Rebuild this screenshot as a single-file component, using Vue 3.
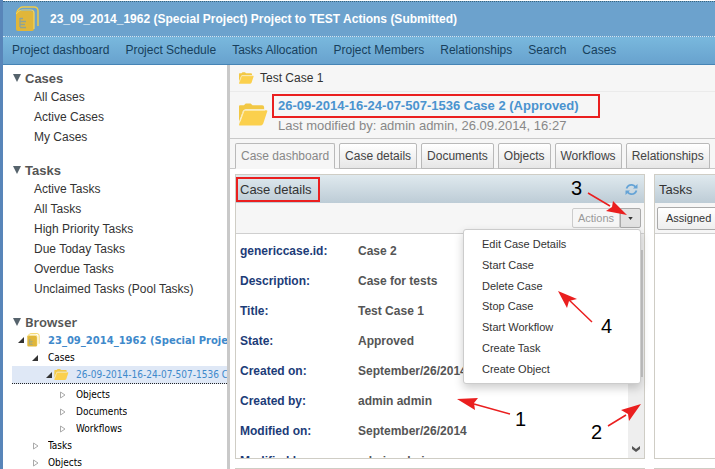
<script setup>
import { ref } from 'vue'

const navLinks = ['Project dashboard', 'Project Schedule', 'Tasks Allocation', 'Project Members', 'Relationships', 'Search', 'Cases']
const groups = [
  { title: 'Cases', items: ['All Cases', 'Active Cases', 'My Cases'] },
  { title: 'Tasks', items: ['Active Tasks', 'All Tasks', 'High Priority Tasks', 'Due Today Tasks', 'Overdue Tasks', 'Unclaimed Tasks (Pool Tasks)'] }
]
const tree = [
  { label: '23_09_2014_1962 (Special Project)', level: 0, open: true, icon: 'book' },
  { label: 'Cases', level: 1, open: true },
  { label: '26-09-2014-16-24-07-507-1536 Case 2', level: 2, open: true, icon: 'folder' },
  { label: 'Objects', level: 3 },
  { label: 'Documents', level: 3 },
  { label: 'Workflows', level: 3 },
  { label: 'Tasks', level: 1 },
  { label: 'Objects', level: 1 }
]
const tabs = ['Case dashboard', 'Case details', 'Documents', 'Objects', 'Workflows', 'Relationships']
const activeTab = ref('Case dashboard')
const details = [
  ['genericcase.id:', 'Case 2'],
  ['Description:', 'Case for tests'],
  ['Title:', 'Test Case 1'],
  ['State:', 'Approved'],
  ['Created on:', 'September/26/2014'],
  ['Created by:', 'admin admin'],
  ['Modified on:', 'September/26/2014'],
  ['Modified by:', 'admin admin']
]
const actions = ['Edit Case Details', 'Start Case', 'Delete Case', 'Stop Case', 'Start Workflow', 'Create Task', 'Create Object']
const menuOpen = ref(true)
</script>

<template>
  <div class="page">
    <svg class="defs" aria-hidden="true">
      <symbol id="folder" viewBox="0 0 30 23">
        <path d="M0 19V3q0-1 1-1h4l2-2h5l2 2h10q2 0 2 2v2H7q-2 0-3 2z" fill="#f2c845" />
        <path d="M6 7h22q2 0 1 2l-4 12q-1 2-3 2H1q-1 0-1-1L4 9q1-2 2-2z" fill="#fbd04d" />
        <path d="M1 19 5 8q1-1 2-1h20" fill="none" stroke="#fdf0c4" stroke-width="1" />
      </symbol>
      <symbol id="book" viewBox="0 0 23 26">
        <path d="M1 7q0-3 3-5 1-1 3-1h11q4 0 4 4v15" fill="none" stroke="#f1cc45" stroke-width="1.4" />
        <path d="M0 7q0-2 2-2h13q3 0 3 3v15q0 2-2 2H2q-2 0-2-2z" fill="#e0b63a" />
        <path d="M0 8q3-4 6-4h9q3 0 3 3v16" fill="none" stroke="#f5d65a" stroke-width="1.2" />
        <path d="M4 12v9M4 12.500h3M4 15.500h6M4 18.500h5M4 21.500h6" fill="none" stroke="#8ea398" stroke-width="1.300" />
      </symbol>
    </svg>

    <header class="header">
      <svg class="book"><use href="#book" /></svg>
      <h1>23_09_2014_1962 (Special Project) Project to TEST Actions (Submitted)</h1>
    </header>
    <nav class="nav">
      <a v-for="l in navLinks" :key="l" href="#">{{ l }}</a>
    </nav>

    <div class="layout">
      <aside class="sidebar">
        <section v-for="g in groups" :key="g.title" class="group">
          <h2><svg class="caret" viewBox="0 0 8 8"><path d="M0 0h8L4 8z" fill="#56636c" /></svg>{{ g.title }}</h2>
          <ul>
            <li v-for="i in g.items" :key="i"><a href="#">{{ i }}</a></li>
          </ul>
        </section>
        <section class="group">
          <h2 class="browser-title"><svg class="caret" viewBox="0 0 8 8"><path d="M0 0h8L4 8z" fill="#56636c" /></svg>Browser</h2>
          <ul class="tree">
            <li v-for="(n, k) in tree" :key="k" :class="['level-' + n.level, n.icon]">
              <svg v-if="n.open" class="twist" viewBox="0 0 7 8"><path d="M6 1v6H0z" fill="#333" /></svg>
              <svg v-else class="twist" viewBox="0 0 7 8"><path d="M1.500 1v6L6 4z" fill="#fff" stroke="#aaa" /></svg>
              <svg v-if="n.icon" class="node-icon"><use :href="'#' + n.icon" /></svg>
              <a href="#">{{ n.label }}</a>
            </li>
          </ul>
        </section>
      </aside>

      <main class="main">
        <div class="crumb">
          <svg class="folder-small"><use href="#folder" /></svg>
          <a href="#">Test Case 1</a>
        </div>
        <div class="case-head">
          <svg class="folder-big"><use href="#folder" /></svg>
          <div class="case-text">
            <h2>26-09-2014-16-24-07-507-1536 Case 2 (Approved)</h2>
            <p>Last modified by: admin admin, 26.09.2014, 16:27</p>
          </div>
        </div>
        <div class="tabs" role="tablist">
          <button v-for="t in tabs" :key="t" role="tab" :class="{ active: t === activeTab }" @click="activeTab = t">{{ t }}</button>
        </div>

        <div class="panels">
          <section class="panel">
            <div class="panel-title">
              <h3 class="marked">Case details</h3>
              <button class="refresh" aria-label="Refresh">
                <svg viewBox="0 0 13 13" fill="none" stroke="#64a3d6" stroke-width="1.800">
                  <path d="M1.500 5.500Q3 1.500 7 1.800q2 .2 3.500 2M11.500 7.500Q10 11.500 6 11.200q-2-.2-3.500-2" />
                  <path d="M12.500 1v4.500H8zM.5 12V7.500H5z" fill="#64a3d6" stroke="none" />
                </svg>
              </button>
            </div>
            <div class="toolbar">
              <div class="split">
                <button class="act">Actions</button>
                <button class="drop" aria-label="Open actions" @click="menuOpen = !menuOpen">
                  <svg viewBox="0 0 6 4"><path d="M0 0h6L3 4z" fill="#333" /></svg>
                </button>
                <ul v-if="menuOpen" class="menu">
                  <li v-for="a in actions" :key="a"><button>{{ a }}</button></li>
                </ul>
              </div>
            </div>
            <div class="panel-body">
              <dl>
                <div v-for="d in details" :key="d[0]">
                  <dt>{{ d[0] }}</dt><dd>{{ d[1] }}</dd>
                </div>
              </dl>
              <div class="scroll">
                <div class="thumb"></div>
                <svg viewBox="0 0 8 6"><path d="M0 0l4 3 4-3v3L4 6 0 3z" fill="#555" /></svg>
              </div>
            </div>
          </section>
          <section class="panel">
            <div class="panel-title"><h3>Tasks</h3></div>
            <div class="toolbar tasks-bar"><button class="assigned">Assigned</button></div>
          </section>
        </div>
        <div class="panels">
          <section class="panel"></section>
          <section class="panel"></section>
        </div>
      </main>
    </div>

    <svg class="notes" width="715" height="469">
      <g stroke="#ea1f1f" stroke-width="1.500">
        <path d="M510 414 474 404M608 426l18-11M588 193l22 13M592 322l-25-24" />
      </g>
      <g fill="#ea1f1f">
        <path d="M457 399l21-1-4 5 1 7zM641 404l-20 6 7 4 1 7zM627 215l-14-14-1 6-6 4zM558 291l19 8-8 2-2 7z" />
      </g>
      <g class="digits">
        <text x="515" y="426">1</text>
        <text x="591" y="439">2</text>
        <text x="571" y="195">3</text>
        <text x="601" y="333">4</text>
      </g>
    </svg>
  </div>
</template>

<style>
body { margin: 0; }
</style>

<style scoped>
* { box-sizing: border-box; }
.page {
  position: relative;
  display: flex;
  flex-direction: column;
  height: 100vh;
  overflow: hidden;
  padding-top: 1px;
  border-left: 3px solid #5885b9;
  background: #fff;
  font-family: "Liberation Sans", Arial, sans-serif;
  font-size: 12px;
  color: #333;
}
h1, h2, h3, p, ul, dl, dd { margin: 0; padding: 0; }
ul { list-style: none; }
a { color: inherit; text-decoration: none; }
button { font: inherit; color: inherit; margin: 0; }
svg { flex: none; display: block; }
.defs { position: absolute; width: 0; height: 0; }

.header {
  display: flex;
  align-items: center;
  gap: 11px;
  flex: none;
  height: 36px;
  padding-left: 13px;
  border-top: 1px dotted #37647d;
  border-bottom: 1px dotted #d4e5f1;
  background: #6ca2cd;
  color: #fff;
}
.header h1 { font-size: 12px; font-weight: bold; white-space: nowrap; }
.header .book { width: 23px; height: 26px; }
.nav {
  display: flex;
  align-items: center;
  gap: 16px;
  flex: none;
  height: 28px;
  padding: 0 9px 2px;
  border-bottom: 1px solid #4684b5;
  background: linear-gradient(#79b8dd, #68a2ce);
  color: #173f5c;
  white-space: nowrap;
}

.layout { display: flex; flex: 1; min-height: 0; }
.sidebar {
  flex: none;
  width: 227px;
  padding-top: 4px;
  overflow: hidden;
  border-right: 3px solid #c9c9c9;
}
.group { margin-bottom: 14px; }
.group h2 {
  display: flex;
  align-items: center;
  gap: 4px;
  height: 18px;
  padding-left: 10px;
  font-size: 13px;
  color: #555;
}
.group h2.browser-title { font-family: "Noto Sans", sans-serif; font-weight: 600; }
.caret { width: 8px; height: 8px; }
.group ul:not(.tree) li { line-height: 20px; padding-left: 31px; white-space: nowrap; }
.tree { padding-left: 9px; font-family: "DejaVu Sans Condensed", "DejaVu Sans", sans-serif; font-stretch: condensed; font-size: 10px; color: #000; }
.tree li { display: flex; align-items: center; height: 17px; white-space: nowrap; }
.tree a { min-width: 0; overflow: hidden; line-height: 17px; }
.twist { width: 7px; height: 8px; margin-right: 9px; }
.level-0 { padding-left: 6px; }
.level-1 { padding-left: 20px; }
.level-2 { padding-left: 34px; }
.level-3 { padding-left: 47px; }
.level-3 .twist { margin-right: 10px; }
.tree .book, .tree .folder { color: #4089cb; }
.tree .book { height: 18px; font-family: "DejaVu Sans", sans-serif; font-stretch: normal; font-weight: bold; }
.tree .folder { height: 18px; margin-bottom: 2px; background: #dfe8f6; border-bottom: 1px dotted #222; }
.book .twist, .folder .twist { margin-right: 1px; }
.node-icon { width: 15px; height: 14px; margin-right: 7px; }
.folder .node-icon { height: 11px; }

.main { flex: 1; min-width: 0; overflow: hidden; background: #fff; }
.crumb, .case-head, .tabs { background: #f6f6f6; }
.crumb {
  display: flex;
  align-items: center;
  gap: 6px;
  height: 27px;
  padding-left: 9px;
  border-bottom: 1px solid #ebebeb;
}
.folder-small { width: 15px; height: 12px; }
.case-head {
  display: flex;
  gap: 4px;
  height: 47px;
  padding: 2px 0 0 9px;
  border-bottom: 1px solid #c9c9c9;
}
.folder-big { width: 29px; height: 23px; margin-top: 9px; }
.case-text { white-space: nowrap; }
.case-text h2 {
  width: 328px;
  height: 24px;
  padding-left: 4px;
  border: 2px solid #ea1f1f;
  font-size: 13px;
  line-height: 20px;
  color: #4a93cf;
}
.case-text p { padding-left: 6px; font-size: 13px; line-height: 15px; color: #888; }
.tabs {
  display: flex;
  gap: 4px;
  height: 30px;
  padding: 4px 5px 0;
  border-bottom: 1px solid #c9c9c9;
}
.tabs button {
  height: 26px;
  padding: 0 5px;
  border: 1px solid #b9b9b9;
  border-radius: 2px 2px 0 0;
  background: linear-gradient(#fff, #e6e6e6);
  color: #444;
  white-space: nowrap;
}
.tabs .active { border-bottom-color: #f6f6f6; background: #f6f6f6; color: #888; }

.panels { display: flex; gap: 9px; padding: 5px 5px 4px; }
.panel { flex: 1 0 410px; height: 285px; border: 1px solid #cfcdc5; background: #fff; }
.panel-title {
  display: flex;
  align-items: center;
  justify-content: space-between;
  height: 28px;
  padding-right: 6px;
  background: linear-gradient(#dfe9ee, #bdccd6);
}
.panel-title h3 { padding-left: 4px; font-size: 13px; font-weight: normal; line-height: 21px; color: #333; }
.panel-title .marked { width: 84px; height: 25px; padding-left: 2px; border: 2px solid #ea1f1f; }
.refresh { padding: 0; border: 0; background: none; }
.refresh svg { width: 13px; height: 13px; }
.toolbar {
  display: flex;
  justify-content: flex-end;
  align-items: center;
  height: 31px;
  padding: 0 3px;
  border-bottom: 1px solid #cfcfcf;
  background: #f6f6f6;
}
.tasks-bar { justify-content: flex-start; padding-left: 2px; }
.assigned { height: 23px; padding: 0 12px 0 8px; border: 1px solid #aaa; border-radius: 2px; background: linear-gradient(#fff, #eee); font-size: 11px; }
.split { position: relative; display: flex; }
.split > button { height: 20px; padding: 0; font-size: 11px; border: 1px solid #ccc; }
.act { width: 48px; border-radius: 2px 0 0 2px; background: #f6f6f6; color: #999; }
.split .drop { display: flex; align-items: center; justify-content: center; width: 21px; border-color: #aaa; border-radius: 0 2px 2px 0; background: #e2e2e2; }
.drop svg { width: 5px; height: 3px; }
.menu {
  position: absolute;
  top: 21px;
  right: 0;
  display: grid;
  grid-auto-rows: 1fr;
  width: 178px;
  height: 155px;
  padding: 4px 0;
  border: 1px solid #ccc;
  border-radius: 3px;
  background: #fff;
  box-shadow: 0 4px 10px rgba(0, 0, 0, 0.2);
}
.menu li { display: flex; align-items: center; }
.menu button { width: 100%; padding: 0 18px; border: 0; background: none; font-size: 11px; text-align: left; }
.panel-body { display: flex; height: 224px; overflow: hidden; }
dl { flex: 1; padding-top: 2px; font-weight: bold; }
dl div { display: flex; height: 30px; line-height: 30px; padding-left: 4px; }
dt { width: 118px; color: #1c3c78; }
dd { color: #555; }
.scroll { display: flex; flex-direction: column; align-items: center; justify-content: space-between; width: 16px; padding: 16px 0 6px; background: #eee; }
.thumb { width: 14px; height: 127px; background: #c8c8c8; }
.scroll svg { width: 8px; height: 6px; }

.notes { position: absolute; top: 0; left: -3px; pointer-events: none; }
.digits { font-size: 20px; fill: #000; }
</style>
